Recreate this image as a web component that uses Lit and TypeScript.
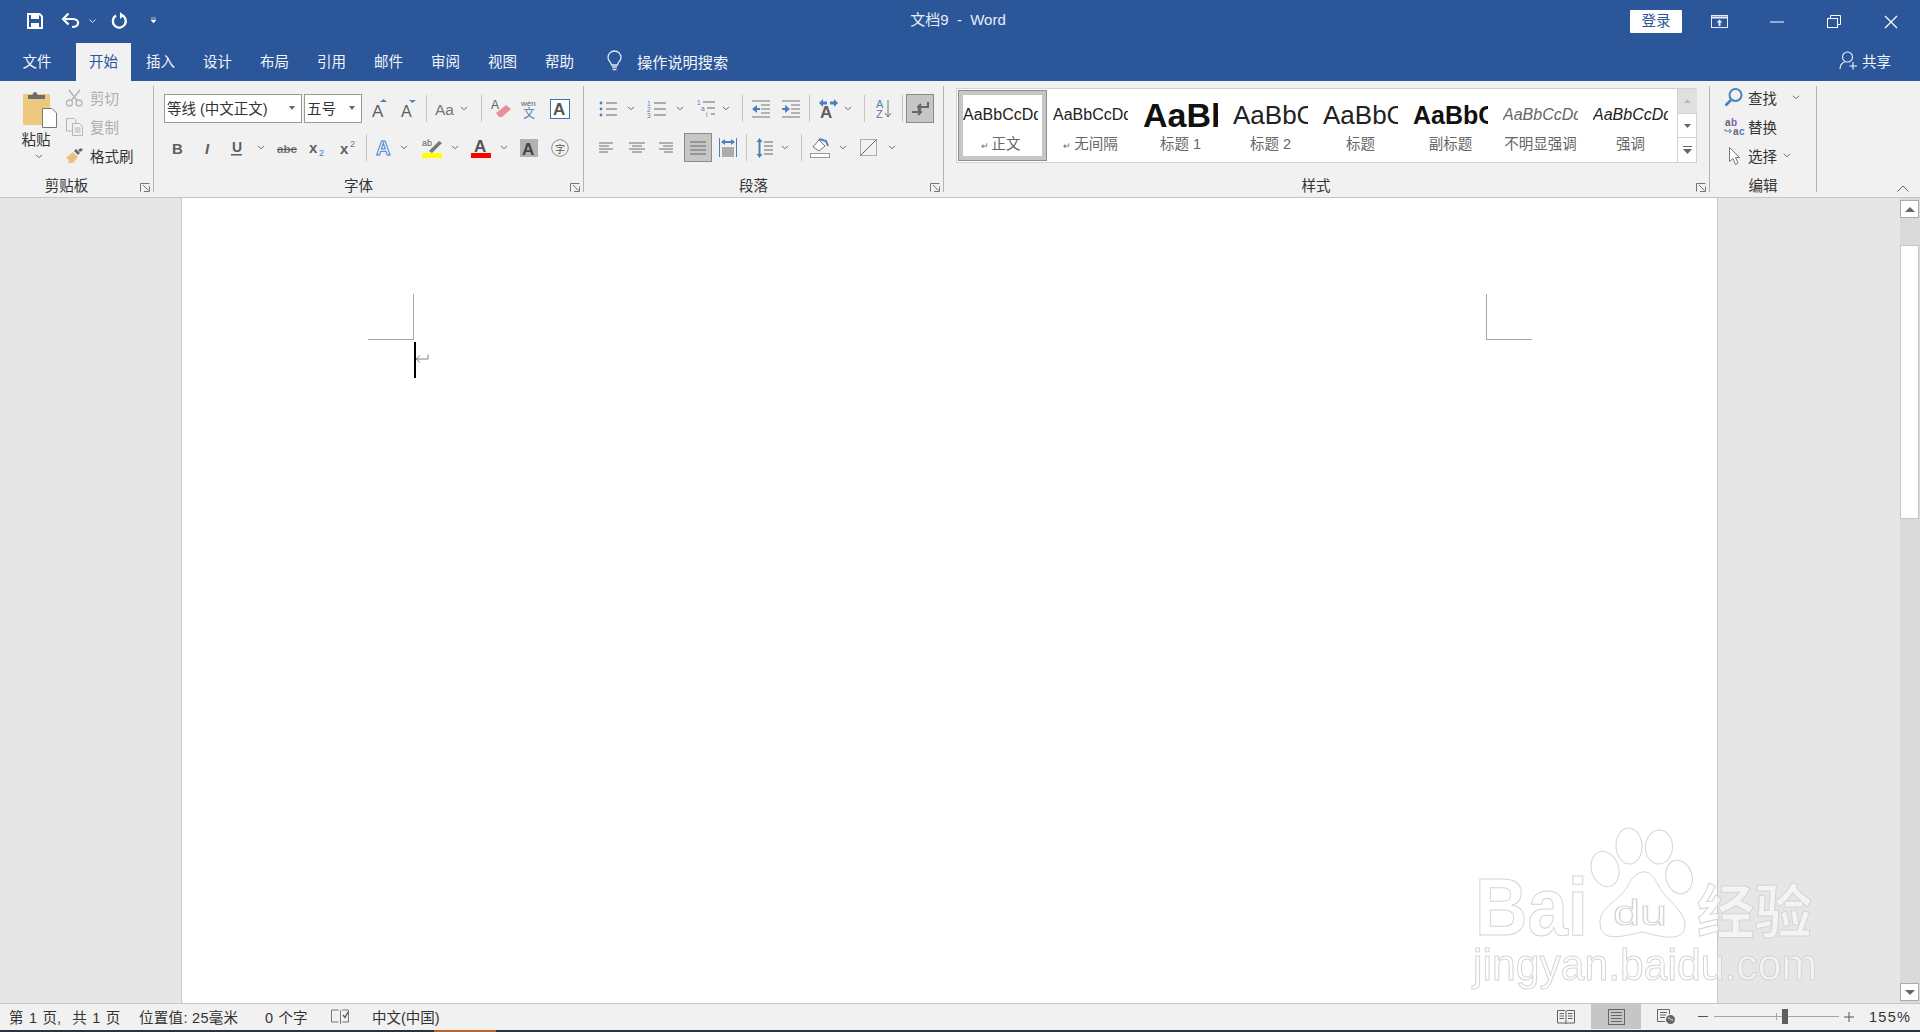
import { LitElement, html, css, TemplateResult } from "lit";
import { customElement } from "lit/decorators.js";

type Tool = { g: number; w: number; icon: TemplateResult };

const GRAY = "#5f5f5f";
const BLUE = "#4a80bb";

// small drop-down arrow used all over the ribbon
const chev = html`<svg width="8" height="5" viewBox="0 0 8 5"><path d="M1 .8 4 3.8 7 .8" fill="none" stroke="#666"/></svg>`;
const sep = html`<span class="sep"></span>`;

const lines = (d: string, color = "#6e6e6e") => html`<svg width="18" height="18" viewBox="0 0 18 18"><path d=${d} fill="none" stroke=${color}/></svg>`;

const icons = {
  grow: html`<svg width="20" height="22" viewBox="0 0 20 22"><text x="4" y="19" font-size="17" fill=${GRAY}>A</text><path d="M12 4 15.500 1 19 4Z" fill=${BLUE}/></svg>`,
  shrink: html`<svg width="20" height="22" viewBox="0 0 20 22"><text x="4" y="19" font-size="16" fill=${GRAY}>A</text><path d="M12 2H19L15.500 5Z" fill=${BLUE}/></svg>`,
  caseA: html`<svg width="22" height="18" viewBox="0 0 22 18"><text x="2" y="15" font-size="15.500" fill="#777">Aa</text></svg>`,
  eraser: html`<svg width="20" height="22" viewBox="0 0 20 22"><text x="1" y="11" font-size="12" fill=${GRAY}>A</text><path d="M6 15 16 7 21 11 12 19H9Z" fill="#e98e9c"/></svg>`,
  wen: html`<svg width="18" height="22" viewBox="0 0 18 22"><text x="1" y="8" font-size="8" fill=${GRAY}>wén</text><text x="3" y="20" font-size="12" fill=${BLUE}>文</text></svg>`,
  boxA: html`<svg style="margin-left:1px" width="20" height="20" viewBox="0 0 20 20"><rect x=".5" y=".5" width="19" height="19" fill="#fff" stroke="#3d74ad"/><text x="3" y="16" font-size="17" font-weight="700" fill="#555">A</text></svg>`,
  bold: html`<svg width="16" height="18" viewBox="0 0 16 18"><text x="3" y="15" font-size="15" font-weight="700" fill=${GRAY}>B</text></svg>`,
  italic: html`<svg width="16" height="18" viewBox="0 0 16 18"><text x="5" y="15" font-size="15" font-style="italic" font-weight="700" fill=${GRAY}>I</text></svg>`,
  under: html`<svg width="16" height="18" viewBox="0 0 16 18"><text x="3" y="13" font-size="14" font-weight="700" fill=${GRAY}>U</text><rect x="2" y="15" width="11" height="1.500" fill=${GRAY}/></svg>`,
  strike: html`<svg width="20" height="18" viewBox="0 0 20 18"><text x="0" y="14" font-size="11.500" font-weight="700" fill="#777">abc</text><rect x="0" y="10" width="20" height="1" fill="#555"/></svg>`,
  sub: html`<svg width="20" height="20" viewBox="0 0 20 20"><text x="2" y="15" font-size="15" font-weight="700" fill=${GRAY}>x</text><text x="12" y="18" font-size="9" fill=${BLUE}>2</text></svg>`,
  sup: html`<svg width="20" height="20" viewBox="0 0 20 20"><text x="3" y="16" font-size="15" font-weight="700" fill=${GRAY}>x</text><text x="13" y="9" font-size="9" fill=${BLUE}>2</text></svg>`,
  glow: html`<svg width="20" height="22" viewBox="0 0 20 22"><text x="2" y="18" font-size="20" font-weight="700" fill="#fff" stroke="#3f83c9" stroke-width="1">A</text></svg>`,
  mark: html`<svg width="20" height="22" viewBox="0 0 20 22"><text x="0" y="9" font-size="9" fill=${GRAY}>ab</text><path d="M7 14 17 4 20 6 10 16Z" fill="#777"/><rect y="16" width="20" height="5" fill="#ff0"/></svg>`,
  colorA: html`<svg width="20" height="22" viewBox="0 0 20 22"><text x="3" y="15" font-size="17" font-weight="700" fill="#555">A</text><rect y="16" width="20" height="5" fill="#f00"/></svg>`,
  shadeA: html`<svg width="18" height="18" viewBox="0 0 18 18"><rect width="18" height="18" fill="#b2b2b2"/><text x="2" y="16" font-size="17" font-weight="700" fill="#444">A</text></svg>`,
  encl: html`<svg width="18" height="18" viewBox="0 0 18 18"><circle cx="9" cy="9" r="8.300" fill="none" stroke="#8a8a8a"/><text x="4" y="13.500" font-size="10" fill="#555">字</text></svg>`,
  bullets: html`<svg width="18" height="18" viewBox="0 0 18 18"><path d="M7 3H18M7 9H18M7 15H18" stroke="#666"/><circle cx="2" cy="3" r="1.400" fill=${BLUE}/><circle cx="2" cy="9" r="1.400" fill=${BLUE}/><circle cx="2" cy="15" r="1.400" fill=${BLUE}/></svg>`,
  numbers: html`<svg width="19" height="18" viewBox="0 0 19 18"><path d="M7 3H19M7 9H19M7 15H19" stroke="#666"/><text x="0" y="6" font-size="6.500" fill=${BLUE}>1</text><text x="0" y="12" font-size="6.500" fill=${BLUE}>2</text><text x="0" y="18" font-size="6.500" fill=${BLUE}>3</text></svg>`,
  multi: html`<svg width="18" height="18" viewBox="0 0 18 18"><path d="M6 2H18M10 8H18M14 14H18" stroke="#666"/><text x="0" y="5" font-size="6.500" fill=${BLUE}>1</text><text x="4" y="11" font-size="6.500" fill=${BLUE}>a</text><text x="9" y="17" font-size="6.500" fill=${BLUE}>i</text></svg>`,
  outdent: html`<svg width="18" height="18" viewBox="0 0 18 18"><path d="M0 1H18M9 5H18M9 9H18M9 13H18M0 17H18" stroke="#777"/><path d="M0 9 5 5V8H8V10H5V13Z" fill=${BLUE}/></svg>`,
  indent: html`<svg width="18" height="18" viewBox="0 0 18 18"><path d="M0 1H18M9 5H18M9 9H18M9 13H18M0 17H18" stroke="#777"/><path d="M8 9 3 5V8H0V10H3V13Z" fill=${BLUE}/></svg>`,
  dir: html`<svg width="19" height="20" viewBox="0 0 19 20"><text x="1" y="19" font-size="17" font-weight="700" fill=${GRAY}>A</text><path d="M0 4 4 0V2.500H8V5.500H4V8ZM19 4 15 0V2.500H11V5.500H15V8Z" fill=${BLUE}/></svg>`,
  sort: html`<svg width="17" height="20" viewBox="0 0 17 20"><text x="0" y="9" font-size="11" fill=${BLUE}>A</text><text x="0" y="19" font-size="11" fill="#8a5bb0">Z</text><path d="M12 1V18M9 14 12 18 15 14" fill="none" stroke="#777"/></svg>`,
  pilcrow: html`<svg width="18" height="16" viewBox="0 0 18 16"><path d="M17 1V6H7M10 3 7 6 10 9M1 11H10M7 8 10 11 7 14" fill="none" stroke="#666" stroke-width="2"/></svg>`,
  left: lines("M0 4H14M0 7H10M0 10H14M0 13H9"),
  center: lines("M0 4H16M3 7H13M0 10H16M3 13H13"),
  right: lines("M0 4H14M4 7H14M0 10H14M5 13H14"),
  just: html`<svg width="16" height="14" viewBox="0 0 16 14"><path d="M0 1H16M0 5H16M0 9H16M0 13H16" stroke="#666"/></svg>`,
  dist: html`<svg width="18" height="20" viewBox="0 0 18 20"><path d="M.5 0V19M17.500 0V19" stroke=${BLUE}/><path d="M3 10H15M3 12H15M3 14H15M3 16H15M3 18H15" stroke="#666"/><path d="M2 4 6 1V3H12V1L16 4 12 7V5H6V7Z" fill=${BLUE}/></svg>`,
  spacing: html`<svg width="17" height="20" viewBox="0 0 17 20"><path d="M8 4H17M8 8H17M8 12H17M8 16H17" stroke="#666"/><path d="M3.500 0 6.500 4H4.500V16H6.500L3.500 20 .5 16H2.500V4H.5Z" fill=${BLUE}/></svg>`,
  shade: html`<svg width="20" height="20" viewBox="0 0 20 20"><path d="M3 9 9 2 15 8 9 13Z" fill="#fff" stroke="#777"/><path d="M9 1 16 3 18 8" fill="none" stroke="#4a80bb" stroke-width="2"/><rect x=".5" y="15.500" width="19" height="4" fill="#fff" stroke="#999"/></svg>`,
  border: html`<svg width="17" height="17" viewBox="0 0 17 17"><rect x=".5" y=".5" width="16" height="16" fill="none" stroke="#666" stroke-dasharray="1 1"/><path d="M.5 16.500 16.500 .5" stroke="#666"/></svg>`,
};

const fontTop: Tool[] = [
  { g: 6, w: 20, icon: icons.grow }, { g: 9, w: 20, icon: icons.shrink }, { g: 9, w: 1, icon: sep },
  { g: 6, w: 22, icon: icons.caseA }, { g: 5, w: 8, icon: chev }, { g: 13, w: 1, icon: sep },
  { g: 8, w: 20, icon: icons.eraser }, { g: 10, w: 18, icon: icons.wen }, { g: 11, w: 20, icon: icons.boxA },
];
const fontBottom: Tool[] = [
  { g: 5, w: 16, icon: icons.bold }, { g: 15, w: 16, icon: icons.italic }, { g: 13, w: 16, icon: icons.under },
  { g: 12, w: 8, icon: chev }, { g: 12, w: 20, icon: icons.strike }, { g: 10, w: 20, icon: icons.sub },
  { g: 10, w: 20, icon: icons.sup }, { g: 9, w: 1, icon: sep }, { g: 7, w: 20, icon: icons.glow },
  { g: 6, w: 8, icon: chev }, { g: 14, w: 20, icon: icons.mark }, { g: 9, w: 8, icon: chev },
  { g: 12, w: 20, icon: icons.colorA }, { g: 9, w: 8, icon: chev }, { g: 12, w: 18, icon: icons.shadeA },
  { g: 13, w: 18, icon: icons.encl },
];
const paraTop: Tool[] = [
  { g: 5, w: 18, icon: icons.bullets }, { g: 10, w: 8, icon: chev }, { g: 12, w: 19, icon: icons.numbers },
  { g: 10, w: 8, icon: chev }, { g: 13, w: 18, icon: icons.multi }, { g: 7, w: 8, icon: chev },
  { g: 12, w: 1, icon: sep }, { g: 9, w: 18, icon: icons.outdent }, { g: 12, w: 18, icon: icons.indent },
  { g: 9, w: 1, icon: sep }, { g: 9, w: 19, icon: icons.dir }, { g: 6, w: 8, icon: chev },
  { g: 12, w: 1, icon: sep }, { g: 11, w: 17, icon: icons.sort }, { g: 9, w: 1, icon: sep },
  { g: 3, w: 28, icon: html`<span class="act">${icons.pilcrow}</span>` },
];
const paraBottom: Tool[] = [
  { g: 7, w: 14, icon: icons.left }, { g: 15, w: 16, icon: icons.center }, { g: 15, w: 14, icon: icons.right },
  { g: 9, w: 28, icon: html`<span class="act">${icons.just}</span>` }, { g: 7, w: 18, icon: icons.dist },
  { g: 9, w: 1, icon: sep }, { g: 9, w: 17, icon: icons.spacing }, { g: 8, w: 8, icon: chev },
  { g: 12, w: 1, icon: sep }, { g: 8, w: 20, icon: icons.shade }, { g: 9, w: 8, icon: chev },
  { g: 13, w: 17, icon: icons.border }, { g: 11, w: 8, icon: chev },
];

const tabs = ["开始", "插入", "设计", "布局", "引用", "邮件", "审阅", "视图", "帮助"];

const styleItems = [
  { name: "正文", mark: true, cls: "s-normal", sel: true },
  { name: "无间隔", mark: true, cls: "s-normal" },
  { name: "标题 1", cls: "s-h1" },
  { name: "标题 2", cls: "s-h2" },
  { name: "标题", cls: "s-h2" },
  { name: "副标题", cls: "s-sub" },
  { name: "不明显强调", cls: "s-em s-faint" },
  { name: "强调", cls: "s-em" },
];

@customElement("app-root")
export class AppRoot extends LitElement {
  static styles = css`
    :host {
      display: flex;
      flex-direction: column;
      width: 1920px;
      height: 1032px;
      overflow: hidden;
      font: 14.500px "Liberation Sans", "Noto Sans CJK SC", sans-serif;
      color: #333;
    }
    svg { display: block; flex: none; overflow: visible; }

    .titlebar {
      display: grid;
      grid-template-columns: 1fr auto 1fr;
      align-items: center;
      height: 43px;
      background: #2b579a;
      color: #e8eef7;
      flex: none;
    }
    .qat { display: flex; align-items: center; padding: 0 0 2px 27px; }
    .title { font-size: 15px; padding: 0 4px 6px 0; white-space: pre; }
    .winctl { display: flex; align-items: center; justify-content: flex-end; height: 100%; }
    .login {
      width: 52px;
      height: 23px;
      margin-right: 29px;
      background: #fff;
      color: #2b579a;
      border-radius: 1px;
      text-align: center;
      line-height: 23px;
    }

    .tabbar {
      display: flex;
      align-items: stretch;
      height: 38px;
      padding-left: 9px;
      background: #2b579a;
      color: #f2f5fa;
      flex: none;
    }
    .tab { width: 55px; margin-right: 2px; padding-bottom: 3px; box-sizing: border-box; display: flex; align-items: center; justify-content: center; }
    .tab.file { margin-right: 11px; width: 56px; }
    .tab.on { background: #f1f1f1; color: #2b579a; }
    .tell { display: flex; align-items: center; gap: 15px; margin-left: 18px; padding-bottom: 3px; font-size: 15.200px; }
    .share { display: flex; align-items: center; gap: 4px; margin-left: auto; padding: 0 29px 3px 0; }

    .ribbon {
      position: relative;
      display: flex;
      height: 117px;
      padding-top: 5px;
      box-sizing: border-box;
      background: #f1f1f1;
      border-bottom: 1px solid #c6c6c6;
      flex: none;
    }
    .group {
      position: relative;
      display: flex;
      flex-direction: column;
      height: 106px;
      box-sizing: border-box;
      border-right: 1px solid #b5b5b5;
      flex: none;
    }
    .label {
      margin-top: auto;
      height: 12px;
      line-height: 12px;
      padding-right: 20px;
      text-align: center;
      color: #333;
    }
    .styles .label { padding-right: 33px; }
    .label.nolaunch { padding-right: 0; }
    .launch { position: absolute; right: 3px; bottom: 0; }

    .clip { width: 154px; }
    .font { width: 430px; padding-top: 8px; }
    .para { width: 360px; padding-top: 8px; }
    .styles { width: 766px; padding: 2px 0 0 12px; }
    .edit { width: 107px; }

    .clip-body { display: flex; }
    .paste { width: 66px; padding-top: 4px; box-sizing: border-box; display: flex; flex-direction: column; align-items: center; }
    .paste .pic { margin-left: 14px; height: 38px; }
    .paste .word { margin-top: 2px; line-height: 20px; margin-left: 6px; }
    .paste .down { margin: 4px 0 0 12px; }

    .small { display: flex; align-items: center; height: 29px; }
    .small .ico { width: 24px; display: flex; justify-content: flex-start; flex: none; }
    .small.off { color: #adadad; }
    .smalls { display: flex; flex-direction: column; margin-top: -3px; }

    .row { display: flex; align-items: center; height: 29px; padding-left: 10px; }
    .row + .row { margin-top: 10px; }
    .cell { display: flex; align-items: center; justify-content: center; height: 100%; flex: none; }
    .sep { display: block; width: 1px; height: 27px; background: #c6c6c6; }
    .act {
      display: flex;
      align-items: center;
      justify-content: center;
      width: 28px;
      height: 29px;
      box-sizing: border-box;
      background: #c6c6c6;
      border: 1px solid #8a8a8a;
    }
    .combo {
      display: flex;
      align-items: center;
      height: 29px;
      box-sizing: border-box;
      padding: 0 6px 2px 2px;
      background: #fff;
      border: 1px solid #999;
      font-size: 14.500px;
      flex: none;
    }
    .combo .tri { margin-left: auto; width: 0; height: 0; border: 3.500px solid transparent; border-top: 4px solid #666; border-bottom: 0; }

    .gallery {
      display: flex;
      height: 75px;
      width: 741px;
      box-sizing: border-box;
      background: #fff;
      border: 1px solid #d2d2d2;
    }
    .item {
      width: 90px;
      flex: none;
      box-sizing: border-box;
      padding: 5px 0 0 6px;
      display: flex;
      flex-direction: column;
    }
    .item.sel { margin: 1px 0 0 1px; height: 71px; width: 89px; padding: 4px 0 0 5px; box-shadow: inset 0 0 0 1px #8e8e8e, inset 0 0 0 5px #c6c6c6; }
    .preview {
      width: 75px;
      height: 42px;
      overflow: hidden;
      white-space: nowrap;
      color: #222;
      display: flex;
      align-items: center;
    }
    .s-normal { font-size: 16px; }
    .s-h1 { font-size: 34px; font-weight: 700; color: #111; }
    .s-h2 { font-size: 26px; }
    .s-sub { font-size: 25px; font-weight: 700; color: #111; }
    .s-em { font-size: 16px; font-style: italic; color: #222; }
    .s-faint { color: #666; }
    .name { width: 75px; text-align: center; color: #666; font-size: 14.500px; line-height: 20px; margin-top: -2px; white-space: nowrap; }
    .name i { font-style: normal; font-size: 9px; margin-right: 3px; }
    .spin { display: flex; flex-direction: column; width: 19px; margin-left: auto; border-left: 1px solid #d2d2d2; flex: none; }
    .spin span { display: flex; align-items: center; justify-content: center; flex: 1; border-bottom: 1px solid #d2d2d2; }
    .spin span:last-child { border-bottom: 0; }
    .spin .dim { background: #e0e0e0; }

    .edit-body { display: flex; flex-direction: column; padding: 0 0 0 14px; margin-top: -3px; }
    .edit-body .more { margin-left: 15px; }
    .edit-body .more.near { margin-left: 6px; }
    .edit-body .ico { width: 24px; }
    .collapse { position: absolute; right: 11px; bottom: 5px; }

    .main { position: relative; display: flex; flex: 1; min-height: 0; background: #e6e6e6; }
    .gutter { width: 181px; flex: none; }
    .page { position: relative; width: 1535px; flex: none; background: #fff; border: solid #c6c6c6; border-width: 0 1px; }
    .rest { flex: 1; }
    .mark { position: absolute; width: 46px; height: 46px; top: 96px; border: 0 solid #a6a6a6; box-sizing: border-box; }
    .mark.l { left: 186px; border-width: 0 1px 1px 0; }
    .mark.r { left: 1304px; border-width: 0 0 1px 1px; }
    .caret { position: absolute; left: 232px; top: 144px; width: 1.500px; height: 36px; background: #000; }
    .ret { position: absolute; left: 233px; top: 156px; }

    .scroll { display: flex; flex-direction: column; width: 20px; padding: 2px 1px 2px 0; box-sizing: border-box; background: #dadada; flex: none; }
    .sbtn { display: flex; align-items: center; justify-content: center; height: 18px; background: #fff; border: 1px solid #ababab; box-sizing: border-box; }
    .thumb { height: 274px; margin-top: 27px; background: #fff; border: 1px solid #c6c6c6; box-sizing: border-box; }
    .sbtn.end { margin-top: auto; }

    .watermark { position: absolute; left: 1470px; top: 627px; filter: blur(.5px); pointer-events: none; }
    .watermark * { fill: #fff; fill-opacity: .55; stroke: #d4d4d4; stroke-width: 1; }
    .watermark text { font-family: "Liberation Sans", "Noto Sans CJK SC", sans-serif; font-weight: 700; }
    .watermark text.thin { font-weight: 400; }

    .status {
      display: flex;
      align-items: center;
      height: 27px;
      padding: 0 0 1px 9px;
      box-sizing: border-box;
      background: #f1f1f1;
      border-top: 1px solid #c6c6c6;
      font-size: 14.500px;
      flex: none;
    }
    .status .pages { width: 130px; white-space: pre; word-spacing: 1.500px; }
    .status .pos { width: 126px; white-space: pre; letter-spacing: .3px; }
    .status .count { width: 66px; white-space: pre; word-spacing: 1.500px; }
    .status .lang { margin-left: 23px; }
    .views { display: flex; align-items: stretch; height: 100%; margin-left: auto; }
    .view { display: flex; align-items: center; justify-content: center; width: 50px; }
    .view.on2 { background: #c6c6c6; }
    .zoombar { display: flex; align-items: center; padding-left: 7px; }
    .track { position: relative; width: 125px; height: 1px; margin: 0 5px 0 6px; background: #a6a6a6; }
    .track i { position: absolute; left: 62px; top: -3px; width: 1px; height: 7px; background: #a6a6a6; }
    .track b { position: absolute; left: 68px; top: -7px; width: 6px; height: 15px; background: #5f5f5f; }
    .pct { width: 66px; padding-right: 9px; box-sizing: border-box; text-align: right; white-space: pre; letter-spacing: 1.200px; }
    .taskbar { display: flex; height: 2px; background: #25343f; flex: none; }
    .taskbar span { width: 62px; margin-left: 434px; background: #b5662f; }
  `;

  private tools(items: Tool[]) {
    return items.map((t) => html`<span class="cell" style="width:${t.w}px;margin-left:${t.g}px">${t.icon}</span>`);
  }

  private launcher() {
    return html`<svg class="launch" width="10" height="9" viewBox="0 0 10 9"><path d="M.5 8.500V.5H9.500M3 2 8.500 7.500M9.500 3.500V8.500H4" fill="none" stroke="#777"/></svg>`;
  }

  private titlebar() {
    return html`
      <div class="titlebar">
        <div class="qat">
          <svg width="16" height="16" viewBox="0 0 16 16"><path d="M1 1H12.500L15 3.500V15H1Z" fill="none" stroke="#fff" stroke-width="2"/><rect x="4" y="1" width="8" height="5" fill="#fff"/><rect x="4" y="10" width="8" height="5" fill="#fff"/></svg>
          <svg style="margin-left:19px" width="18" height="16" viewBox="0 0 18 16"><path d="M3 6H11C18 6 18 14 10 14" fill="none" stroke="#fff" stroke-width="2.200"/><path d="M6.500 .5 1 6 6.500 11.500" fill="none" stroke="#fff" stroke-width="2.200"/></svg>
          <svg style="margin-left:9px" width="7" height="4" viewBox="0 0 7 4"><path d="M.5 .5 3.500 3.500 6.500 .5" fill="none" stroke="#dfe7f3"/></svg>
          <svg style="margin-left:14px" width="17" height="17" viewBox="0 0 17 17"><path d="M6 3.500A6.500 6.500 0 1 0 11 2.800" fill="none" stroke="#fff" stroke-width="2.300"/><path d="M10 0V7L14 3.500Z" fill="#fff"/></svg>
          <svg style="margin-left:23px" width="7" height="7" viewBox="0 0 7 7"><path d="M1 1H6M1 3H6L3.500 6Z" fill="#fff" stroke="#fff" stroke-width=".6"/></svg>
        </div>
        <div class="title">文档9  -  Word</div>
        <div class="winctl">
          <div class="login">登录</div>
          <svg style="margin-right:42px" width="17" height="13" viewBox="0 0 17 13"><rect x=".5" y=".5" width="16" height="12" fill="none" stroke="#e8eef7"/><path d="M0 2.500H17" stroke="#e8eef7" stroke-width="2"/><path d="M8.500 4.500 5.500 7.500H7.500V11H9.500V7.500H11.500Z" fill="#e8eef7"/></svg>
          <svg style="margin-right:43px" width="14" height="2" viewBox="0 0 14 2"><rect y=".5" width="14" height="1" fill="#fff"/></svg>
          <svg style="margin-right:44px" width="14" height="13" viewBox="0 0 14 13"><path d="M3.500 3V.5H13.500V9.500H10.500" fill="none" stroke="#fff"/><rect x=".5" y="3.500" width="10" height="9" fill="none" stroke="#fff"/></svg>
          <svg style="margin-right:23px" width="12" height="12" viewBox="0 0 12 12"><path d="M0 0 12 12M12 0 0 12" stroke="#fff" stroke-width="1.200"/></svg>
        </div>
      </div>`;
  }

  private tabbar() {
    return html`
      <div class="tabbar">
        <div class="tab file">文件</div>
        ${tabs.map((t, i) => html`<div class="tab ${i === 0 ? "on" : ""}">${t}</div>`)}
        <div class="tell">
          <svg width="15" height="20" viewBox="0 0 15 20"><path d="M4.500 14C4 10.500 1 10 1 6.500A6.500 6.500 0 0 1 14 6.500C14 10 11 10.500 10.500 14Z" fill="none" stroke="#e2e9f3" stroke-width="1.300"/><path d="M5 16H10M5.500 18.500H9.500" stroke="#e2e9f3" stroke-width="1.500"/></svg>
          <span>操作说明搜索</span>
        </div>
        <div class="share">
          <svg width="19" height="19" viewBox="0 0 19 19"><circle cx="8.500" cy="6" r="5" fill="none" stroke="#f2f5fa" stroke-width="1.100"/><path d="M1 18C1 14 3 12 5.500 11M14 11V18.500M10.500 15H18" fill="none" stroke="#f2f5fa" stroke-width="1.100"/></svg>
          <span>共享</span>
        </div>
      </div>`;
  }

  private clipboard() {
    return html`
      <div class="group clip">
        <div class="clip-body">
          <div class="paste">
            <div class="pic">
              <svg width="34" height="38" viewBox="0 0 34 38"><rect y="4" width="27" height="31" rx="1.500" fill="#edc87e"/><path d="M5 9V5H9.500C10 1 14 1 14.500 5H22V9Z" fill="#6d6d6d"/><path d="M19.500 18.500H29L33.500 23V37.500H19.500Z" fill="#fff" stroke="#777"/></svg>
            </div>
            <div class="word">粘贴</div>
            <div class="down">${chev}</div>
          </div>
          <div class="smalls">
            <div class="small off"><span class="ico"><svg width="17" height="18" viewBox="0 0 17 18"><circle cx="3.500" cy="14" r="3" fill="none" stroke="#b5b5b5" stroke-width="1.300"/><circle cx="13" cy="14" r="3" fill="none" stroke="#b5b5b5" stroke-width="1.300"/><path d="M3 1 11.500 12M14 1 5 12" stroke="#b5b5b5" stroke-width="1.500"/></svg></span>剪切</div>
            <div class="small off"><span class="ico"><svg width="17" height="18" viewBox="0 0 17 18"><path d="M.5 .5H8L10 2.500V13H.5Z" fill="#f1f1f1" stroke="#b5b5b5"/><path d="M6.500 5.500H13.500L16.500 8.500V17.500H6.500Z" fill="#f1f1f1" stroke="#b5b5b5"/><path d="M8.500 10H14.500M8.500 12H14.500M8.500 14H14.500" stroke="#b5b5b5"/></svg></span>复制</div>
            <div class="small"><span class="ico"><svg width="18" height="16" viewBox="0 0 18 16"><path d="M0 10 7 4 12 9 7 15 2 15 3 12Z" fill="#e8c17c"/><path d="M8 3 10 1 14 5 12 7ZM12 2 15 0 17 2 14 4Z" fill="#666"/></svg></span>格式刷</div>
          </div>
        </div>
        <div class="label">剪贴板</div>
        ${this.launcher()}
      </div>`;
  }

  private fontGroup() {
    return html`
      <div class="group font">
        <div class="row">
          <span class="combo" style="width:138px"><span>等线 (中文正文)</span><span class="tri"></span></span>
          <span class="combo" style="width:58px;margin-left:2px"><span>五号</span><span class="tri"></span></span>
          ${this.tools(fontTop)}
        </div>
        <div class="row">${this.tools(fontBottom)}</div>
        <div class="label">字体</div>
        ${this.launcher()}
      </div>`;
  }

  private paraGroup() {
    return html`
      <div class="group para">
        <div class="row">${this.tools(paraTop)}</div>
        <div class="row">${this.tools(paraBottom)}</div>
        <div class="label">段落</div>
        ${this.launcher()}
      </div>`;
  }

  private stylesGroup() {
    return html`
      <div class="group styles">
        <div class="gallery">
          ${styleItems.map(
            (s) => html`
              <div class="item ${s.sel ? "sel" : ""}">
                <div class="preview ${s.cls}">AaBbCcDd</div>
                <div class="name">${s.mark ? html`<i>↵</i>` : ""}${s.name}</div>
              </div>`
          )}
          <div class="spin">
            <span class="dim"><svg width="7" height="4" viewBox="0 0 7 4"><path d="M0 4 3.500 0 7 4Z" fill="#bbb"/></svg></span>
            <span><svg width="7" height="4" viewBox="0 0 7 4"><path d="M0 0H7L3.500 4Z" fill="#666"/></svg></span>
            <span><svg width="9" height="8" viewBox="0 0 9 8"><path d="M0 .5H9" stroke="#666"/><path d="M0 3H9L4.500 8Z" fill="#666"/></svg></span>
          </div>
        </div>
        <div class="label">样式</div>
        ${this.launcher()}
      </div>`;
  }

  private editGroup() {
    return html`
      <div class="group edit">
        <div class="edit-body">
          <div class="small"><span class="ico"><svg width="19" height="19" viewBox="0 0 19 19"><circle cx="11.500" cy="7" r="6" fill="none" stroke=${BLUE} stroke-width="2"/><path d="M7 12 1.500 17.500" stroke=${BLUE} stroke-width="2.600"/></svg></span>查找<span class="more">${chev}</span></div>
          <div class="small"><span class="ico"><svg width="21" height="18" viewBox="0 0 21 18"><text x="1" y="8" font-size="10" font-weight="700" fill="#666">a</text><text x="7" y="8" font-size="10" font-weight="700" fill="#8a5bb0">b</text><text x="9" y="17" font-size="10" font-weight="700" fill="#666">a</text><text x="15" y="17" font-size="10" font-weight="700" fill=${BLUE}>c</text><path d="M1 11V13H7M5 11 7.500 13 5 15" fill="none" stroke=${BLUE}/></svg></span>替换</div>
          <div class="small"><span class="ico"><svg style="margin-left:5px" width="11" height="18" viewBox="0 0 11 18"><path d="M.5 .5 10.500 10.500H6.500L9 16 6.500 17.500 4 11.500.5 14.500Z" fill="#fff" stroke="#777"/></svg></span>选择<span class="more near">${chev}</span></div>
        </div>
        <div class="label nolaunch">编辑</div>
      </div>`;
  }

  private watermark() {
    return html`
      <svg class="watermark" width="370" height="175" viewBox="0 0 370 175">
        <ellipse cx="135" cy="44" rx="13.500" ry="18" transform="rotate(-18 135 44)"/>
        <ellipse cx="159" cy="21" rx="13" ry="18" transform="rotate(-3 159 21)"/>
        <ellipse cx="189" cy="22" rx="13.500" ry="17" transform="rotate(3 189 22)"/>
        <ellipse cx="209" cy="52" rx="13" ry="17" transform="rotate(-15 209 52)"/>
        <path d="M130 97C130 82 150 75 157 62C167 42 180 43 187 58C195 75 215 85 215 100C215 118 190 112 173 107C155 110 130 120 130 97Z"/>
        <text x="5" y="110" font-size="81" textLength="113" lengthAdjust="spacingAndGlyphs">Bai</text>
        <text class="thin" x="143" y="100" font-size="35" textLength="54" lengthAdjust="spacingAndGlyphs">du</text>
        <text x="227" y="108" font-size="58" textLength="115" lengthAdjust="spacingAndGlyphs">经验</text>
        <text class="thin" x="3" y="155" font-size="44" textLength="344" lengthAdjust="spacingAndGlyphs">jingyan.baidu.com</text>
      </svg>`;
  }

  private statusbar() {
    return html`
      <div class="status">
        <span class="pages">第 1 页,  共 1 页</span>
        <span class="pos">位置值: 25毫米</span>
        <span class="count">0 个字</span>
        <svg width="18" height="16" viewBox="0 0 18 16"><path d="M7.500 1H.5V13H7.500M9.500 1V15M11 1H17.500V13H11" fill="none" stroke="#777"/><path d="M12 6 14 8.500 17 3" fill="none" stroke="#555" stroke-width="1.300"/></svg>
        <span class="lang">中文(中国)</span>
        <div class="views">
          <span class="view"><svg width="18" height="14" viewBox="0 0 18 14"><path d="M.5 .5H8L9 1.500 10 .5H17.500V13H10L9 13.500 8 13H.5ZM9 1.500V13.500M2.500 3.500H7M2.500 6H7M2.500 8.500H7M11 3.500H15.500M11 6H15.500M11 8.500H15.500" fill="none" stroke="#5f5f5f"/></svg></span>
          <span class="view on2"><svg width="17" height="16" viewBox="0 0 17 16"><rect x=".5" y=".5" width="16" height="15" fill="none" stroke="#666"/><path d="M3 3.500H14M3 6.500H14M3 9.500H14M3 12.500H14" stroke="#666"/></svg></span>
          <span class="view"><svg width="18" height="15" viewBox="0 0 18 15"><path d="M.5 .5H12.500V5M.5 .5V12.500H8M3 3.500H10M3 6H9M3 8.500H8" fill="none" stroke="#666"/><circle cx="13.500" cy="10.500" r="4.500" fill="#666"/><path d="M11 9C13 8 14 12 16 11" stroke="#fff" fill="none"/></svg></span>
        </div>
        <div class="zoombar">
          <svg width="10" height="1" viewBox="0 0 10 1"><rect width="10" height="1" fill="#555"/></svg>
          <span class="track"><i></i><b></b></span>
          <svg width="10" height="10" viewBox="0 0 10 10"><path d="M0 5H10M5 0V10" stroke="#555"/></svg>
        </div>
        <span class="pct">155%</span>
      </div>
      <div class="taskbar"><span></span></div>`;
  }

  render() {
    return html`
      ${this.titlebar()}
      ${this.tabbar()}
      <div class="ribbon">
        ${this.clipboard()}
        ${this.fontGroup()}
        ${this.paraGroup()}
        ${this.stylesGroup()}
        ${this.editGroup()}
        <svg class="collapse" width="12" height="7" viewBox="0 0 12 7"><path d="M.5 6.500 6 1 11.500 6.500" fill="none" stroke="#666"/></svg>
      </div>
      <div class="main">
        <div class="gutter"></div>
        <div class="page">
          <span class="mark l"></span>
          <span class="mark r"></span>
          <span class="caret"></span>
          <svg class="ret" width="14" height="10" viewBox="0 0 14 10"><path d="M13 .5V5H1.500M5 1.500 1 5 5 8.500" fill="none" stroke="#808080"/></svg>
        </div>
        <div class="rest"></div>
        <div class="scroll">
          <div class="sbtn"><svg width="10" height="5" viewBox="0 0 10 5"><path d="M0 5 5 0 10 5Z" fill="#666"/></svg></div>
          <div class="thumb"></div>
          <div class="sbtn end"><svg width="10" height="5" viewBox="0 0 10 5"><path d="M0 0H10L5 5Z" fill="#666"/></svg></div>
        </div>
        ${this.watermark()}
      </div>
      ${this.statusbar()}
    `;
  }
}
